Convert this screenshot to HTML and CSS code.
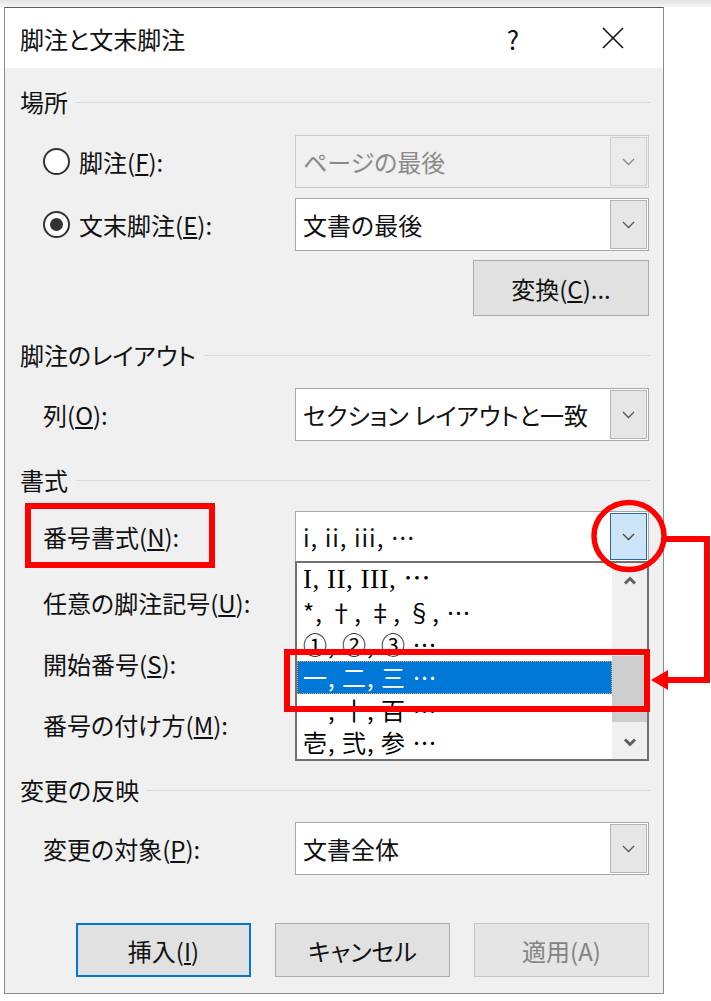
FILE: index.html
```html
<!DOCTYPE html>
<html lang="ja">
  <head>
    <meta charset="UTF-8" />
    <meta name="viewport" content="width=device-width, initial-scale=1.0" />
    <title>脚注と文末脚注</title>
    <link rel="stylesheet" href="styles.css">
  </head>
  <body>
    <div class="screen">
      <div class="dialog">
        <div class="titlebar">
          <span class="title">脚注と文末脚注</span>
          <span class="help">?</span>
          <span class="close">
            <svg width="22" height="22" viewBox="0 0 22 22"><path d="M1 1L21 21M21 1L1 21" fill="none" stroke="#111" stroke-width="1.6"/></svg>
          </span>
        </div>

        <div class="content">
          <div class="group-head head-place"><span>場所</span><i></i></div>

          <div class="field row-foot">
            <div class="label radio-label"><span class="radio"></span>脚注(<u>F</u>):</div>
            <div class="combo disabled">
              <span class="value">ページの最後</span>
              <span class="arrow"><svg width="13" height="8" viewBox="0 0 13 8"><path d="M1 1l5.5 5.5L12 1" fill="none" stroke="#8a8a8a" stroke-width="1.3"/></svg></span>
            </div>
          </div>

          <div class="field row-end">
            <div class="label radio-label"><span class="radio checked"></span>文末脚注(<u>E</u>):</div>
            <div class="combo">
              <span class="value">文書の最後</span>
              <span class="arrow"><svg width="13" height="8" viewBox="0 0 13 8"><path d="M1 1l5.5 5.5L12 1" fill="none" stroke="#555" stroke-width="1.3"/></svg></span>
            </div>
          </div>

          <div class="convert-row">
            <div class="btn">変換(<u>C</u>)...</div>
          </div>

          <div class="group-head head-layout"><span>脚注のレイアウト</span><i></i></div>

          <div class="field row-columns">
            <div class="label">列(<u>O</u>):</div>
            <div class="combo">
              <span class="value">セクション レイアウトと一致</span>
              <span class="arrow"><svg width="13" height="8" viewBox="0 0 13 8"><path d="M1 1l5.5 5.5L12 1" fill="none" stroke="#555" stroke-width="1.3"/></svg></span>
            </div>
          </div>

          <div class="group-head head-format"><span>書式</span><i></i></div>

          <div class="field row-number">
            <div class="label">番号書式(<u>N</u>):</div>
            <div class="combo open">
              <span class="value">i, ii, iii, ⋯</span>
              <span class="arrow"><svg width="13" height="8" viewBox="0 0 13 8"><path d="M1 1l5.5 5.5L12 1" fill="none" stroke="#444" stroke-width="1.3"/></svg></span>

              <div class="listbox">
                <div class="items">
                  <div class="item serif">I, II, III, ⋯</div>
                  <div class="item">*, †, ‡, §, ⋯</div>
                  <div class="item">①, ②, ③ ⋯</div>
                  <div class="item selected">一, 二, 三 ⋯</div>
                  <div class="item">一, 十, 百 ⋯</div>
                  <div class="item">壱, 弐, 参 ⋯</div>
                </div>
                <div class="scrollbar">
                  <span class="scroll-btn"><svg width="14" height="9" viewBox="0 0 14 9"><path d="M2 7.5l5-5 5 5" fill="none" stroke="#606060" stroke-width="3"/></svg></span>
                  <span class="track"><span class="thumb"></span></span>
                  <span class="scroll-btn"><svg width="14" height="9" viewBox="0 0 14 9"><path d="M2 1.5l5 5 5-5" fill="none" stroke="#606060" stroke-width="3"/></svg></span>
                </div>
              </div>
            </div>
          </div>

          <div class="field row-symbol">
            <div class="label">任意の脚注記号(<u>U</u>):</div>
            <div class="blank"></div>
          </div>

          <div class="field row-start">
            <div class="label">開始番号(<u>S</u>):</div>
            <div class="blank"></div>
          </div>

          <div class="field row-restart">
            <div class="label">番号の付け方(<u>M</u>):</div>
            <div class="blank"></div>
          </div>

          <div class="group-head head-apply"><span>変更の反映</span><i></i></div>

          <div class="field row-target">
            <div class="label">変更の対象(<u>P</u>):</div>
            <div class="combo">
              <span class="value">文書全体</span>
              <span class="arrow"><svg width="13" height="8" viewBox="0 0 13 8"><path d="M1 1l5.5 5.5L12 1" fill="none" stroke="#555" stroke-width="1.3"/></svg></span>
            </div>
          </div>

          <div class="actions">
            <div class="btn default">挿入(<u>I</u>)</div>
            <div class="btn">キャンセル</div>
            <div class="btn off">適用(A)</div>
          </div>
        </div>
      </div>

      <!-- red markup drawn over the screenshot -->
      <svg class="marks" width="711" height="1001" viewBox="0 0 711 1001">
        <rect x="28" y="506" width="184" height="59" fill="none" stroke="#fe0000" stroke-width="6"/>
        <rect x="287" y="652" width="360" height="57" fill="none" stroke="#fe0000" stroke-width="6"/>
        <ellipse cx="629" cy="536" rx="35" ry="33.5" fill="none" stroke="#fe0000" stroke-width="5.5"/>
        <polyline points="665,539 707,539 707,680 664,680" fill="none" stroke="#fe0000" stroke-width="6"/>
        <polygon points="651,680 668,670 668,690" fill="#fe0000"/>
      </svg>
    </div>
  </body>
</html>
```

FILE: styles.css
```css
* {
  box-sizing: border-box;
}
body {
  margin: 0;
  background: #fff;
  font-family: "Noto Sans CJK JP", "Noto Sans", sans-serif;
  font-feature-settings: "palt";
  color: #111;
}
.screen {
  position: relative;
  width: 711px;
  height: 1001px;
  overflow: hidden;
  padding: 7px 0 0 4px;
  background: linear-gradient(#e2e2e2 0, #f6f6f6 7px, #fff 7px);
}
.dialog {
  width: 660px;
  border: 1px solid #8c8c8c;
  border-top-color: #5c5c5c;
  background: #f0f0f0;
}
.titlebar {
  height: 60px;
  background: #fff;
  display: flex;
  align-items: center;
  padding-left: 15px;
  padding-right: 28px;
}
.title {
  flex: 1;
  font-size: 24px;
}
.help {
  width: 40px;
  text-align: center;
  font-size: 26px;
}
.close {
  width: 44px;
  margin-left: 58px;
  display: flex;
  justify-content: center;
}

.content {
  padding: 0 13px 16px 15px;
}
.group-head {
  display: flex;
  align-items: center;
  height: 30px;
  font-size: 24px;
  line-height: 30px;
}
.group-head i {
  flex: 1;
  height: 1px;
  margin-left: 8px;
  background: #d8d8d8;
}
.head-place { margin-top: 19px; }
.head-layout { margin-top: 24px; }
.head-format { margin-top: 24px; }
.head-apply { margin-top: 24px; }

.field {
  display: grid;
  grid-template-columns: 275px 354px;
  align-items: center;
}
.row-foot { margin-top: 18px; }
.row-end { margin-top: 10px; }
.row-columns { margin-top: 18px; }
.row-number { margin-top: 16px; }
.row-symbol { margin-top: 13px; }
.row-start { margin-top: 7px; }
.row-restart { margin-top: 7px; }
.row-target { margin-top: 17px; }

.label {
  padding-left: 23px;
  font-size: 24px;
  white-space: nowrap;
}
.radio-label {
  display: flex;
  align-items: center;
}
.radio {
  width: 27px;
  height: 27px;
  margin-right: 9px;
  border: 2px solid #333;
  border-radius: 50%;
  background: #fff;
  display: flex;
  align-items: center;
  justify-content: center;
}
.radio.checked::after {
  content: "";
  width: 13px;
  height: 13px;
  border-radius: 50%;
  background: #333;
}

.combo {
  position: relative;
  height: 53px;
  border: 1px solid #a8a8a8;
  background: #fff;
  display: flex;
  align-items: center;
}
.combo .value {
  flex: 1;
  min-width: 0;
  padding-left: 7px;
  font-size: 24px;
  white-space: nowrap;
}
.combo .arrow {
  align-self: stretch;
  width: 37px;
  margin: 1px 1px 1px 0;
  border: 1px solid #b4b4b4;
  background: #e6e6e6;
  display: flex;
  align-items: center;
  justify-content: center;
}
.combo.disabled {
  background: #f0f0f0;
  border-color: #cccccc;
  color: #8a8a8a;
}
.combo.disabled .arrow {
  background: #ebebeb;
  border-color: #cfcfcf;
}
.combo.open {
  height: 51px;
}
.combo.open .value {
  letter-spacing: 1px;
}
.combo.open .arrow {
  background: #cce4f7;
  border-color: #2b6aa8;
}
.blank {
  height: 54px;
}

.listbox {
  position: absolute;
  left: -1px;
  top: 100%;
  width: 354px;
  height: 200px;
  border: 2px solid #707070;
  background: #fff;
  display: flex;
  z-index: 2;
}
.items {
  flex: 1;
  display: grid;
  grid-template-rows: repeat(6, minmax(0, 1fr));
}
.item {
  display: flex;
  align-items: center;
  min-height: 0;
  padding-left: 6px;
  font-size: 24px;
  line-height: 1.2;
  letter-spacing: 1px;
  white-space: nowrap;
  color: #000;
}
.item.serif {
  font-family: "Liberation Serif", "Noto Sans CJK JP", serif;
  font-size: 27px;
  letter-spacing: 0.5px;
}
.item.selected {
  background: #0078d7;
  color: #fff;
  outline: 1px dotted #f0a050;
  outline-offset: -1px;
}
.scrollbar {
  width: 35px;
  background: #f0f0f0;
  display: flex;
  flex-direction: column;
}
.scroll-btn {
  height: 34px;
  display: flex;
  align-items: center;
  justify-content: center;
}
.track {
  flex: 1;
}
.thumb {
  display: block;
  height: 66px;
  margin-top: 59px;
  background: #cdcdcd;
}

.btn {
  height: 56px;
  border: 1px solid #adadad;
  background: #e1e1e1;
  font-size: 24px;
  display: flex;
  align-items: center;
  justify-content: center;
}
.convert-row {
  margin-top: 9px;
  display: flex;
  justify-content: flex-end;
  padding-right: 1px;
}
.convert-row .btn {
  width: 176px;
}
.actions {
  margin-top: 48px;
  display: flex;
  justify-content: flex-end;
  gap: 24px;
  padding-right: 1px;
}
.actions .btn {
  width: 175px;
  height: 54px;
}
.btn.default {
  border: 2px solid #0078d7;
}
.btn.off {
  background: #e5e5e5;
  border-color: #c4c4c4;
  color: #838383;
}

.marks {
  position: absolute;
  left: 0;
  top: 0;
  pointer-events: none;
  z-index: 5;
}
```
